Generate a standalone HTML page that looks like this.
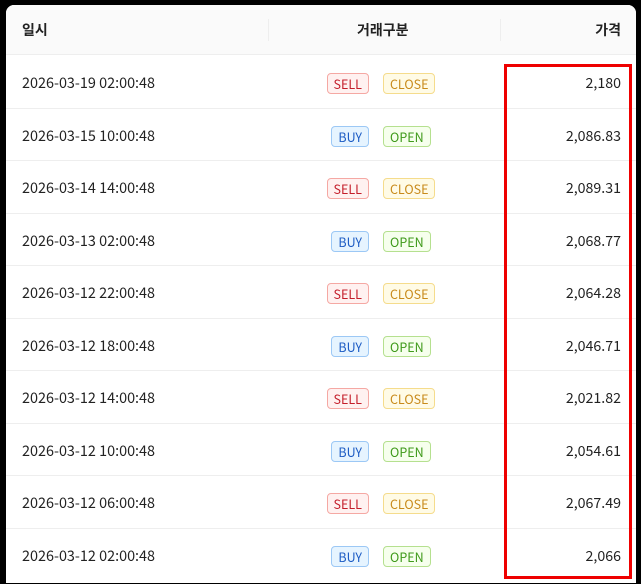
<!DOCTYPE html>
<html><head><meta charset="utf-8"><style>
*{margin:0;padding:0;box-sizing:border-box}
body{width:641px;height:584px;background:#000;position:relative;overflow:hidden;font-family:"Liberation Sans","Noto Sans CJK KR",sans-serif;color:#222;font-size:14px}
.card{position:absolute;left:6px;top:5px;width:630px;height:578px;background:#fff;border-radius:8px 8px 0 0;overflow:hidden}
.head{position:absolute;left:0;top:0;width:630px;height:50px;background:#fafafa;border-bottom:1px solid #eee;font-weight:bold;font-family:"Noto Sans CJK KR",sans-serif}
.head span{position:absolute;top:15px;font-size:14px;line-height:20px}
.sep{position:absolute;top:14px;width:1px;height:22px;background:#eee}
.row{position:absolute;left:0;width:630px;height:52.5px;border-bottom:1px solid #eee}
.d{position:absolute;left:16px;top:1px;line-height:52px;font-family:"Noto Sans CJK KR",sans-serif;font-size:14.4px}
.t{position:absolute;left:250px;width:250px;top:17px;display:flex;justify-content:center;gap:14px}
.tag{height:21px;line-height:19px;font-size:12.5px;padding:0 6px;border:1px solid;border-radius:4px;font-family:"Noto Sans CJK KR",sans-serif}
.sell{color:#c41d2a;background:#fff1f0;border-color:#f5a8a3}
.close{color:#c88a1a;background:#fffbe6;border-color:#f5dc8c}
.buy{color:#1d5cc4;background:#e6f4ff;border-color:#9cc8f5}
.open{color:#3f9a1a;background:#f6ffed;border-color:#b5e08f}
.p{position:absolute;right:15px;top:1px;line-height:52px;font-family:"Noto Sans CJK KR",sans-serif;font-size:14.2px}
.red{position:absolute;left:504px;top:64px;width:128px;height:515px;border:3px solid #e00;}
</style></head><body>
<div class="card">
<div class="head"><span style="left:16px">일시</span><div class="sep" style="left:262px"></div><span style="left:351px">거래구분</span><div class="sep" style="left:494px"></div><span style="right:15px">가격</span></div>
<div class="row" style="top:51px"><div class="d">2026-03-19 02:00:48</div><div class="t"><span class="tag sell">SELL</span><span class="tag close">CLOSE</span></div><div class="p">2,180</div></div>
<div class="row" style="top:103.5px"><div class="d">2026-03-15 10:00:48</div><div class="t"><span class="tag buy">BUY</span><span class="tag open">OPEN</span></div><div class="p">2,086.83</div></div>
<div class="row" style="top:156px"><div class="d">2026-03-14 14:00:48</div><div class="t"><span class="tag sell">SELL</span><span class="tag close">CLOSE</span></div><div class="p">2,089.31</div></div>
<div class="row" style="top:208.5px"><div class="d">2026-03-13 02:00:48</div><div class="t"><span class="tag buy">BUY</span><span class="tag open">OPEN</span></div><div class="p">2,068.77</div></div>
<div class="row" style="top:261px"><div class="d">2026-03-12 22:00:48</div><div class="t"><span class="tag sell">SELL</span><span class="tag close">CLOSE</span></div><div class="p">2,064.28</div></div>
<div class="row" style="top:313.5px"><div class="d">2026-03-12 18:00:48</div><div class="t"><span class="tag buy">BUY</span><span class="tag open">OPEN</span></div><div class="p">2,046.71</div></div>
<div class="row" style="top:366px"><div class="d">2026-03-12 14:00:48</div><div class="t"><span class="tag sell">SELL</span><span class="tag close">CLOSE</span></div><div class="p">2,021.82</div></div>
<div class="row" style="top:418.5px"><div class="d">2026-03-12 10:00:48</div><div class="t"><span class="tag buy">BUY</span><span class="tag open">OPEN</span></div><div class="p">2,054.61</div></div>
<div class="row" style="top:471px"><div class="d">2026-03-12 06:00:48</div><div class="t"><span class="tag sell">SELL</span><span class="tag close">CLOSE</span></div><div class="p">2,067.49</div></div>
<div class="row" style="top:523.5px;border-bottom:none"><div class="d">2026-03-12 02:00:48</div><div class="t"><span class="tag buy">BUY</span><span class="tag open">OPEN</span></div><div class="p">2,066</div></div>
</div>
<div class="red"></div>
</body></html>
